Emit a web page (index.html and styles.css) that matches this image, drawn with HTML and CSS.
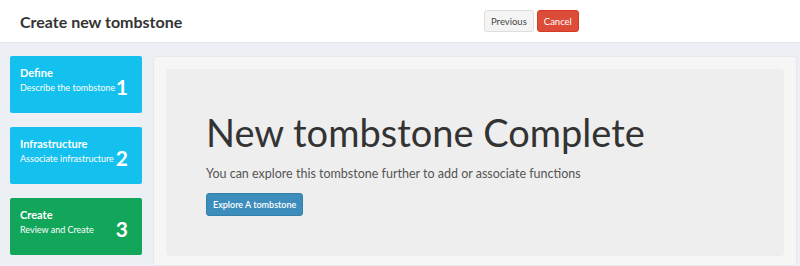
FILE: index.html
```html
<!DOCTYPE html>
<html lang="en">
<head>
  <meta charset="UTF-8">
  <meta name="viewport" content="width=device-width, initial-scale=1.0">
  <title>Create new tombstone</title>
  <link rel="stylesheet" href="styles.css">
</head>
<body>
  <header class="page-header">
    <h1 class="page-title">Create new tombstone</h1>
    <div class="header-actions">
      <button class="btn btn-default">Previous</button>
      <button class="btn btn-danger">Cancel</button>
    </div>
  </header>

  <div class="content">
    <!-- wizard steps -->
    <div class="steps">
      <div class="step step-aqua">
        <div class="step-text">
          <div class="step-title">Define</div>
          <div class="step-desc">Describe the tombstone</div>
        </div>
        <div class="step-num">1</div>
      </div>
      <div class="step step-aqua">
        <div class="step-text">
          <div class="step-title">Infrastructure</div>
          <div class="step-desc">Associate infrastructure</div>
        </div>
        <div class="step-num">2</div>
      </div>
      <div class="step step-green">
        <div class="step-text">
          <div class="step-title">Create</div>
          <div class="step-desc">Review and Create</div>
        </div>
        <div class="step-num">3</div>
      </div>
    </div>

    <div class="main-box">
      <div class="jumbotron">
        <h2 class="jumbo-title">New tombstone Complete</h2>
        <p class="jumbo-text">You can explore this tombstone further to add or associate functions</p>
        <button class="btn btn-primary">Explore A tombstone</button>
      </div>
    </div>
  </div>
</body>
</html>
```

FILE: styles.css
```css
/* page base */
html, body {
  margin: 0;
  padding: 0;
}
body {
  height: 266px;
  background-color: #ecf0f5;
  font-family: "Lato", "Liberation Sans", sans-serif;
  color: #333;
  overflow: hidden;
}

/* header */
.page-header {
  display: grid;
  grid-template-columns: 464px auto;
  align-items: center;
  height: 43px;
  padding-left: 20px;
  background-color: #fff;
  border-bottom: 1px solid #dfe3ea;
  box-sizing: border-box;
}
.page-title {
  margin: 0;
  font-size: 16px;
  font-weight: 700;
  color: #333;
}
.header-actions {
  display: flex;
  gap: 3px;
}

/* buttons */
.btn {
  font-family: inherit;
  font-size: 9.5px;
  padding: 0 6px;
  height: 22px;
  border: 1px solid transparent;
  border-radius: 3px;
  cursor: pointer;
}
.btn-default {
  background-color: #f4f4f4;
  border-color: #ddd;
  color: #444;
}
.btn-danger {
  background-color: #dd4b39;
  border-color: #d73925;
  color: #fff;
}
.btn-primary {
  background-color: #3c8dbc;
  border-color: #367fa9;
  color: #fff;
  font-size: 9px;
  font-weight: 600;
  height: 23px;
  padding: 0 6px;
}

/* content area */
.content {
  display: flex;
  gap: 11px;
  padding: 13px 3px 0 10px;
}
.steps {
  display: flex;
  flex-direction: column;
  gap: 14px;
  width: 132px;
  flex-shrink: 0;
}
.step {
  display: flex;
  justify-content: space-between;
  align-items: center;
  height: 57px;
  padding: 0 14px 0 10px;
  border-radius: 2px;
  color: #fff;
  box-sizing: border-box;
}
.step-aqua {
  background-color: #13c0ee;
}
.step-green {
  background-color: #12a65b;
}
.step-text {
  align-self: flex-start;
  padding-top: 10px;
}
.step-title {
  font-size: 11px;
  font-weight: 700;
  margin-bottom: 3px;
}
.step-desc {
  font-size: 9px;
}
.step-num {
  font-size: 21px;
  font-weight: 700;
  padding-top: 3px;
}

/* main box */
.main-box {
  flex: 1;
  padding: 12px 12px 9px;
  background-color: #f6f6f6;
  border: 1px solid #e6e8ec;
  border-radius: 2px;
}
.jumbotron {
  height: 187px;
  padding: 43px 40px 0 40px;
  background-color: #eee;
  border-radius: 4px;
  box-sizing: border-box;
}
.jumbo-title {
  margin: 0;
  font-size: 38px;
  font-weight: 400;
  color: #333;
  line-height: 1.1;
}
.jumbo-text {
  margin: 12px 0 11px;
  font-size: 12.5px;
  color: #555;
}
```
